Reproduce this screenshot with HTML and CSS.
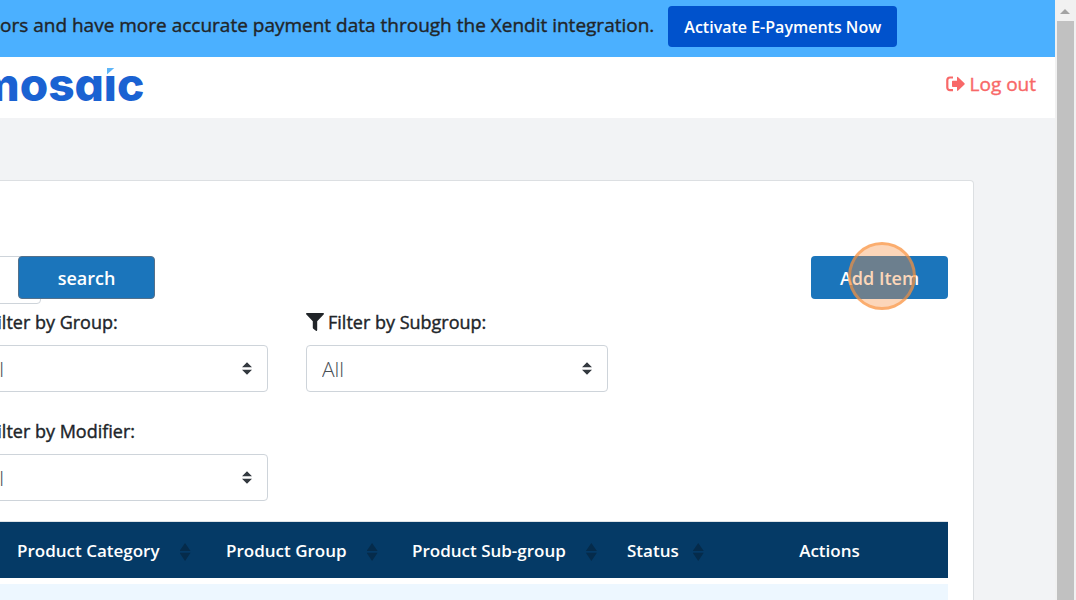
FILE: index.html
```html
<!DOCTYPE html>
<html lang="en">
<head>
    <meta charset="UTF-8">
    <meta name="viewport" content="width=device-width, initial-scale=1.0">
    <title>Mosaic</title>
    <link rel="stylesheet" href="styles.css">
</head>
<body>
    <div class="page">
        <div class="banner">
            <span class="banner-text">ors and have more accurate payment data through the Xendit integration.</span>
            <button type="button" class="activate">Activate E-Payments Now</button>
        </div>

        <header class="topbar">
            <div class="logo">mosa<span class="logo-i">ı</span>c</div>
            <a href="#" class="logout">
                <svg width="19" height="16" viewBox="0 0 19 16" aria-hidden="true">
                    <path d="M7 1.500H4A2.700 2.700 0 0 0 1.300 4.200V11.500A2.700 2.700 0 0 0 4 14.200H7" fill="none" stroke="currentColor" stroke-width="2.200"/>
                    <path d="M6 5.500Q6 4.700 6.800 4.700H11V1.700Q11 .3 12.200 1.200L18.500 7.200Q19 7.900 18.500 8.600L12.200 14.600Q11 15.500 11 14.100V11H6.800Q6 11 6 10.200Z" fill="currentColor"/>
                </svg>
                Log out
            </a>
        </header>

        <main class="card">
            <div class="toolbar">
                <div class="search-group">
                    <input type="text" class="search-input" aria-label="Search">
                    <button type="button" class="btn search-button">search</button>
                </div>
                <div class="add-wrap">
                    <button type="button" class="btn">Add Item</button>
                    <span class="click-marker"></span>
                </div>
            </div>

            <div class="filters">
                <div class="filter">
                    <label for="group"><svg class="funnel" viewBox="0 0 18 18"><path d="M.8 0H17.200Q18.500.3 17.600 1.500L11.200 8.200V17Q11 18.300 9.900 17.700L7.300 15.700Q6.800 15.300 6.800 14.700V8.200L.4 1.500Q-.5.3.8 0Z"/></svg>Filter by Group:</label>
                    <select id="group"><option>All</option></select>
                </div>
                <div class="filter">
                    <label for="subgroup"><svg class="funnel" viewBox="0 0 18 18"><path d="M.8 0H17.200Q18.500.3 17.600 1.500L11.200 8.200V17Q11 18.300 9.900 17.700L7.300 15.700Q6.800 15.300 6.800 14.700V8.200L.4 1.500Q-.5.3.8 0Z"/></svg>Filter by Subgroup:</label>
                    <select id="subgroup"><option>All</option></select>
                </div>
                <div class="filter">
                    <label for="modifier"><svg class="funnel" viewBox="0 0 18 18"><path d="M.8 0H17.200Q18.500.3 17.600 1.500L11.200 8.200V17Q11 18.300 9.900 17.700L7.300 15.700Q6.800 15.300 6.800 14.700V8.200L.4 1.500Q-.5.3.8 0Z"/></svg>Filter by Modifier:</label>
                    <select id="modifier"><option>All</option></select>
                </div>
            </div>

            <table class="items">
                <colgroup>
                    <col class="col-check">
                    <col class="col-category">
                    <col class="col-group">
                    <col class="col-subgroup">
                    <col class="col-status">
                    <col>
                </colgroup>
                <thead>
                    <tr>
                        <td></td>
                        <th>Product Category<span class="sort"></span></th>
                        <th>Product Group<span class="sort"></span></th>
                        <th>Product Sub-group<span class="sort"></span></th>
                        <th class="status">Status<span class="sort"></span></th>
                        <th class="actions">Actions</th>
                    </tr>
                </thead>
                <tbody>
                    <tr>
                        <td colspan="6"></td>
                    </tr>
                </tbody>
            </table>
        </main>
    </div>
    <div class="scrollbar">
        <span class="arrow"></span>
        <span class="thumb"></span>
    </div>
</body>
</html>
```
FILE: styles.css
```css
* {
    box-sizing: border-box;
}

body {
    margin: 0;
    font-family: 'Open Sans', sans-serif;
    font-size: 18px;
    color: #212529;
    background: #f2f3f5;
    display: flex;
    height: 100vh;
    overflow: hidden;
}

button {
    font-family: inherit;
    font-weight: 600;
    color: #fff;
    border: none;
    border-radius: 4px;
    cursor: pointer;
}

/* the font has no medium weight, thicken the regular one */
.banner-text,
.logout,
.filter label {
    -webkit-text-stroke: 0.4px currentColor;
}

.page {
    flex: 1;
    min-width: 0;
    overflow: hidden;
}

.banner {
    display: flex;
    align-items: center;
    gap: 14px;
    height: 57px;
    padding-bottom: 4px;
    background: #4bb0ff;
    font-size: 19px;
    white-space: nowrap;
}

.banner-text {
    padding-bottom: 4px;
}

.activate {
    height: 41px;
    padding: 0 16px;
    background: #0052cc;
    font-size: 16px;
}

.topbar {
    display: flex;
    justify-content: space-between;
    align-items: center;
    height: 61px;
    padding-right: 19px;
    background: #fff;
}

.logo {
    margin-left: -23px;
    padding-bottom: 8px;
    font-family: Inter, sans-serif;
    font-size: 46px;
    font-weight: 800;
    font-feature-settings: 'cv11';
    line-height: 56px;
    color: #1a62d2;
}

.logo-i {
    position: relative;
}

/* light blue flag in place of the dot */
.logo-i::before {
    content: '';
    position: absolute;
    top: 12px;
    left: 3px;
    width: 8px;
    height: 7px;
    background: #5db5f8;
    clip-path: polygon(0 0, 100% 0, 0 100%);
}

.logout {
    display: flex;
    align-items: center;
    gap: 5px;
    padding-bottom: 8px;
    font-size: 19px;
    color: #f86868;
    text-decoration: none;
}

.card {
    min-height: 600px;
    margin: 62px 81px 0 -60px;
    padding: 75px 25px 0 26px;
    background: #fff;
    border: 1px solid #dcdfe2;
    border-left: none;
    border-radius: 4px;
}

.toolbar {
    display: flex;
    justify-content: space-between;
    align-items: flex-start;
}

.search-group {
    display: flex;
    align-items: flex-start;
}

.search-input {
    width: 75px;
    height: 48px;
    border: 1px solid #ced4da;
    border-radius: 4px;
}

.btn {
    width: 137px;
    height: 43px;
    background: #1b75bb;
    font-size: 18px;
}

.search-button {
    margin-left: -23px;
    border: 1px solid #54708a;
}

.add-wrap {
    position: relative;
}

.click-marker {
    position: absolute;
    top: -14px;
    left: 37px;
    width: 68px;
    height: 68px;
    border: 3px solid rgba(250, 145, 60, 0.6);
    border-radius: 50%;
    background: rgba(248, 145, 65, 0.37);
    pointer-events: none;
}

.filters {
    display: grid;
    grid-template-columns: 302px 302px;
    gap: 26px 38px;
    margin-top: 5px;
}

.filter label {
    display: flex;
    align-items: center;
    gap: 4px;
    height: 26px;
    margin-bottom: 10px;
}

.funnel {
    width: 18px;
    height: 18px;
    fill: #212529;
}

select {
    display: block;
    width: 100%;
    height: 47px;
    padding: 0 15px;
    appearance: none;
    font-family: inherit;
    font-size: 21px;
    font-weight: 300;
    color: #495057;
    border: 1px solid #ced4da;
    border-radius: 4px;
    background: #fff url("data:image/svg+xml,%3Csvg xmlns='http://www.w3.org/2000/svg' viewBox='0 0 4 5'%3E%3Cpath fill='%23343a40' d='M2 0L0 2h4zm0 5L0 3h4z'/%3E%3C/svg%3E") no-repeat right 15px center / 10px 13px;
}

.items {
    width: 100%;
    margin-top: 20px;
    table-layout: fixed;
    border-spacing: 0;
    border-top: 1px solid #dee2e6;
}

.col-check {
    width: 41px;
}

.col-category {
    width: 209px;
}

.col-group {
    width: 186px;
}

.col-subgroup {
    width: 215px;
}

.col-status {
    width: 94px;
}

.items thead {
    background: #053a66;
    color: #fff;
}

.items th {
    height: 56px;
    padding: 0 0 0 10px;
    font-size: 17px;
    font-weight: 600;
    text-align: left;
    white-space: nowrap;
}

.items .actions {
    padding: 0;
    text-align: center;
}

.sort {
    display: inline-block;
    width: 11px;
    height: 18px;
    margin-left: 20px;
    vertical-align: middle;
    background: #052b4b;
    clip-path: polygon(50% 0, 100% 45%, 0 45%, 0 55%, 100% 55%, 50% 100%, 0 55%, 0 45%);
}

.status .sort {
    margin-left: 14px;
}

.items tbody td {
    height: 60px;
    border-top: 6px solid #fff;
    background: #edf7ff;
    background-clip: padding-box;
}

.scrollbar {
    display: flex;
    flex-direction: column;
    width: 21px;
    padding: 0 2px;
    background: #f1f1f1;
}

.arrow {
    height: 21px;
    background: #a3a3a3;
    clip-path: polygon(8px 9px, 13px 14px, 3px 14px);
}

.thumb {
    flex: 1;
    background: #c1c1c1;
}
```
